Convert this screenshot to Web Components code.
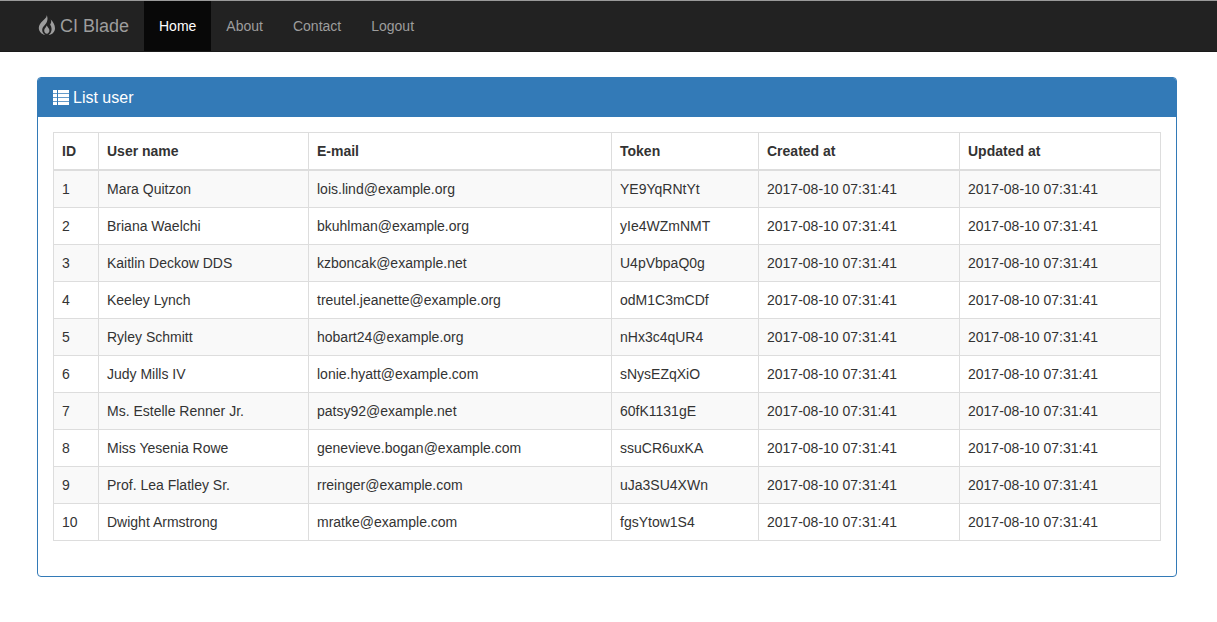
<!DOCTYPE html>
<html>
<head>
<meta charset="utf-8">
<title>CI Blade</title>
<style>
  body { margin: 0; background: #fff; font-family: "Liberation Sans", Arial, sans-serif; font-size: 14px; line-height: 20px; color: #333; }
  main { display: block; padding: 25px 40px 0 37px; }
</style>
</head>
<body>
<app-navbar brand="CI Blade">
  <nav-link active>Home</nav-link>
  <nav-link>About</nav-link>
  <nav-link>Contact</nav-link>
  <nav-link>Logout</nav-link>
</app-navbar>
<main>
  <app-panel heading="List user">
    <user-table></user-table>
  </app-panel>
</main>
<script>
class AppNavbar extends HTMLElement {
  constructor() {
    super();
    this.attachShadow({ mode: 'open' });
    this.shadowRoot.innerHTML = `
      <style>
        :host { display: block; background: #222; border-top: 1px solid #9a9a9a; box-sizing: border-box; border-bottom: 1px solid #1a1a1a; height: 52px; padding-left: 37px; }
        .bar { display: flex; height: 50px; }
        .brand { display: flex; align-items: center; gap: 4px; width: 107px; font-size: 18px; color: #9d9d9d; }
        svg { width: 18px; height: 20px; margin: -2px 0 0 1px; fill: #9d9d9d; }
        .links { display: flex; }
      </style>
      <div class="bar">
        <div class="brand">
          <svg viewBox="0 0 18 20"><path d="M8.500 0C9 2.500 6.800 3.700 4.600 6 2.500 8.200.8 10 .8 13c0 3.600 2.800 6.300 6.400 7-1.800-1.200-3-2.800-3-5 0-3.300 3.300-5 4.700-8.300C9.800 4.500 9.800 2 8.500 0z"/><path d="M12.700 4.500c1 2.200.3 3.600-.6 5 1 1.400 1.500 2.900 1.500 4.500 0 2.500-1.100 4.500-3 6 3.800-.5 6.400-3.200 6.400-6.800 0-3.500-2-6.400-4.300-8.700z"/><path d="M8.700 10.500c-.5 1.700-2.500 3-2.500 5 0 1.700 1.100 3 2.700 3.300 1.500-.5 2.500-1.800 2.500-3.400 0-1.900-1.700-3-2.700-4.900z"/></svg>
          <span>${this.getAttribute('brand')}</span>
        </div>
        <div class="links"><slot></slot></div>
      </div>`;
  }
}
customElements.define('app-navbar', AppNavbar);

class NavLink extends HTMLElement {
  constructor() {
    super();
    this.attachShadow({ mode: 'open' });
    this.shadowRoot.innerHTML = `
      <style>
        :host { display: block; padding: 15px; line-height: 20px; height: 20px; color: #9d9d9d; }
        :host([active]) { background: #080808; color: #fff; }
      </style>
      <slot></slot>`;
  }
}
customElements.define('nav-link', NavLink);

class AppPanel extends HTMLElement {
  constructor() {
    super();
    this.attachShadow({ mode: 'open' });
    this.shadowRoot.innerHTML = `
      <style>
        :host { display: block; border: 1px solid #337ab7; border-radius: 4px; background: #fff; }
        .heading { display: flex; align-items: center; gap: 4px; height: 39px; padding: 0 15px; background: #337ab7; color: #fff; font-size: 16px; border-radius: 3px 3px 0 0; }
        svg { width: 16px; height: 15px; fill: #fff; }
        .body { padding: 15px 15px 35px; }
      </style>
      <div class="heading">
        <svg viewBox="0 0 16 15"><path d="M0 0h4v3.200H0zM5 0h11v3.200H5zM0 3.900h4v3.200H0zM5 3.900h11v3.200H5zM0 7.800h4V11H0zM5 7.800h11V11H5zM0 11.700h4v3.200H0zM5 11.700h11v3.200H5z"/></svg>
        <span>${this.getAttribute('heading')}</span>
      </div>
      <div class="body"><slot></slot></div>`;
  }
}
customElements.define('app-panel', AppPanel);

const users = [
  [1, 'Mara Quitzon', 'lois.lind@example.org', 'YE9YqRNtYt'],
  [2, 'Briana Waelchi', 'bkuhlman@example.org', 'yIe4WZmNMT'],
  [3, 'Kaitlin Deckow DDS', 'kzboncak@example.net', 'U4pVbpaQ0g'],
  [4, 'Keeley Lynch', 'treutel.jeanette@example.org', 'odM1C3mCDf'],
  [5, 'Ryley Schmitt', 'hobart24@example.org', 'nHx3c4qUR4'],
  [6, 'Judy Mills IV', 'lonie.hyatt@example.com', 'sNysEZqXiO'],
  [7, 'Ms. Estelle Renner Jr.', 'patsy92@example.net', '60fK1131gE'],
  [8, 'Miss Yesenia Rowe', 'genevieve.bogan@example.com', 'ssuCR6uxKA'],
  [9, 'Prof. Lea Flatley Sr.', 'rreinger@example.com', 'uJa3SU4XWn'],
  [10, 'Dwight Armstrong', 'mratke@example.com', 'fgsYtow1S4'],
];
const stamp = '2017-08-10 07:31:41';

class UserTable extends HTMLElement {
  constructor() {
    super();
    this.attachShadow({ mode: 'open' });
    const rows = users.map(u => `<tr>${u.map(v => `<td>${v}</td>`).join('')}<td>${stamp}</td><td>${stamp}</td></tr>`).join('');
    this.shadowRoot.innerHTML = `
      <style>
        :host { display: block; }
        table { width: 1107px; border-collapse: collapse; table-layout: fixed; }
        th, td { border: 1px solid #ddd; padding: 8px; line-height: 20px; text-align: left; vertical-align: top; }
        th { border-bottom-width: 2px; }
        thead tr { height: 37px; }
        tbody tr:nth-child(odd) { background: #f9f9f9; }
      </style>
      <table>
        <colgroup><col style="width:45px"><col style="width:210px"><col style="width:303px"><col style="width:147px"><col style="width:201px"><col style="width:201px"></colgroup>
        <thead><tr><th>ID</th><th>User name</th><th>E-mail</th><th>Token</th><th>Created at</th><th>Updated at</th></tr></thead>
        <tbody>${rows}</tbody>
      </table>`;
  }
}
customElements.define('user-table', UserTable);
</script>
</body>
</html>
